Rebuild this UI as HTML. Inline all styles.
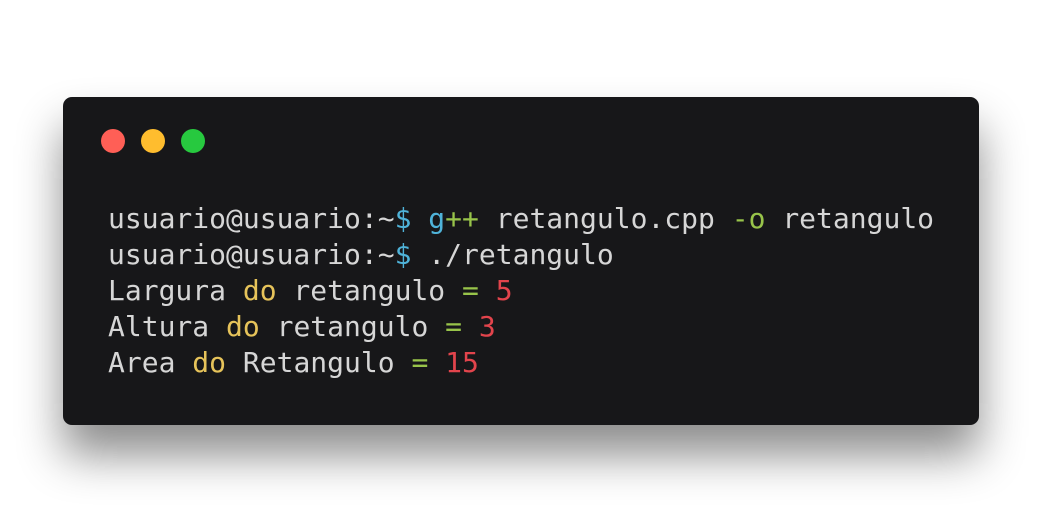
<!DOCTYPE html>
<html><head><style>
html,body{margin:0;padding:0;background:#fff;width:1042px;height:522px;overflow:hidden}
.win{position:absolute;left:63px;top:97px;width:916px;height:328px;background:#171719;border-radius:9px;box-shadow:0 30px 45px rgba(0,0,0,0.45)}
.dot{position:absolute;top:32px;width:24px;height:24px;border-radius:50%}
pre{position:absolute;left:45px;top:104px;margin:0;font-family:"DejaVu Sans Mono","Liberation Mono",monospace;font-size:28px;line-height:36px;color:#d6d6d6}
.b{color:#4fb3d9}.g{color:#98c44a}.y{color:#e6c35a}.r{color:#e2444c}
</style></head><body>
<div class="win">
<div class="dot" style="left:38px;background:#ff5f56"></div>
<div class="dot" style="left:78px;background:#ffbd2e"></div>
<div class="dot" style="left:118px;background:#27c93f"></div>
<pre>usuario@usuario:~<span class="b">$</span> <span class="b">g</span><span class="g">++</span> retangulo.cpp <span class="g">-o</span> retangulo
usuario@usuario:~<span class="b">$</span> ./retangulo
Largura <span class="y">do</span> retangulo <span class="g">=</span> <span class="r">5</span>
Altura <span class="y">do</span> retangulo <span class="g">=</span> <span class="r">3</span>
Area <span class="y">do</span> Retangulo <span class="g">=</span> <span class="r">15</span></pre>
</div>
</body></html>
